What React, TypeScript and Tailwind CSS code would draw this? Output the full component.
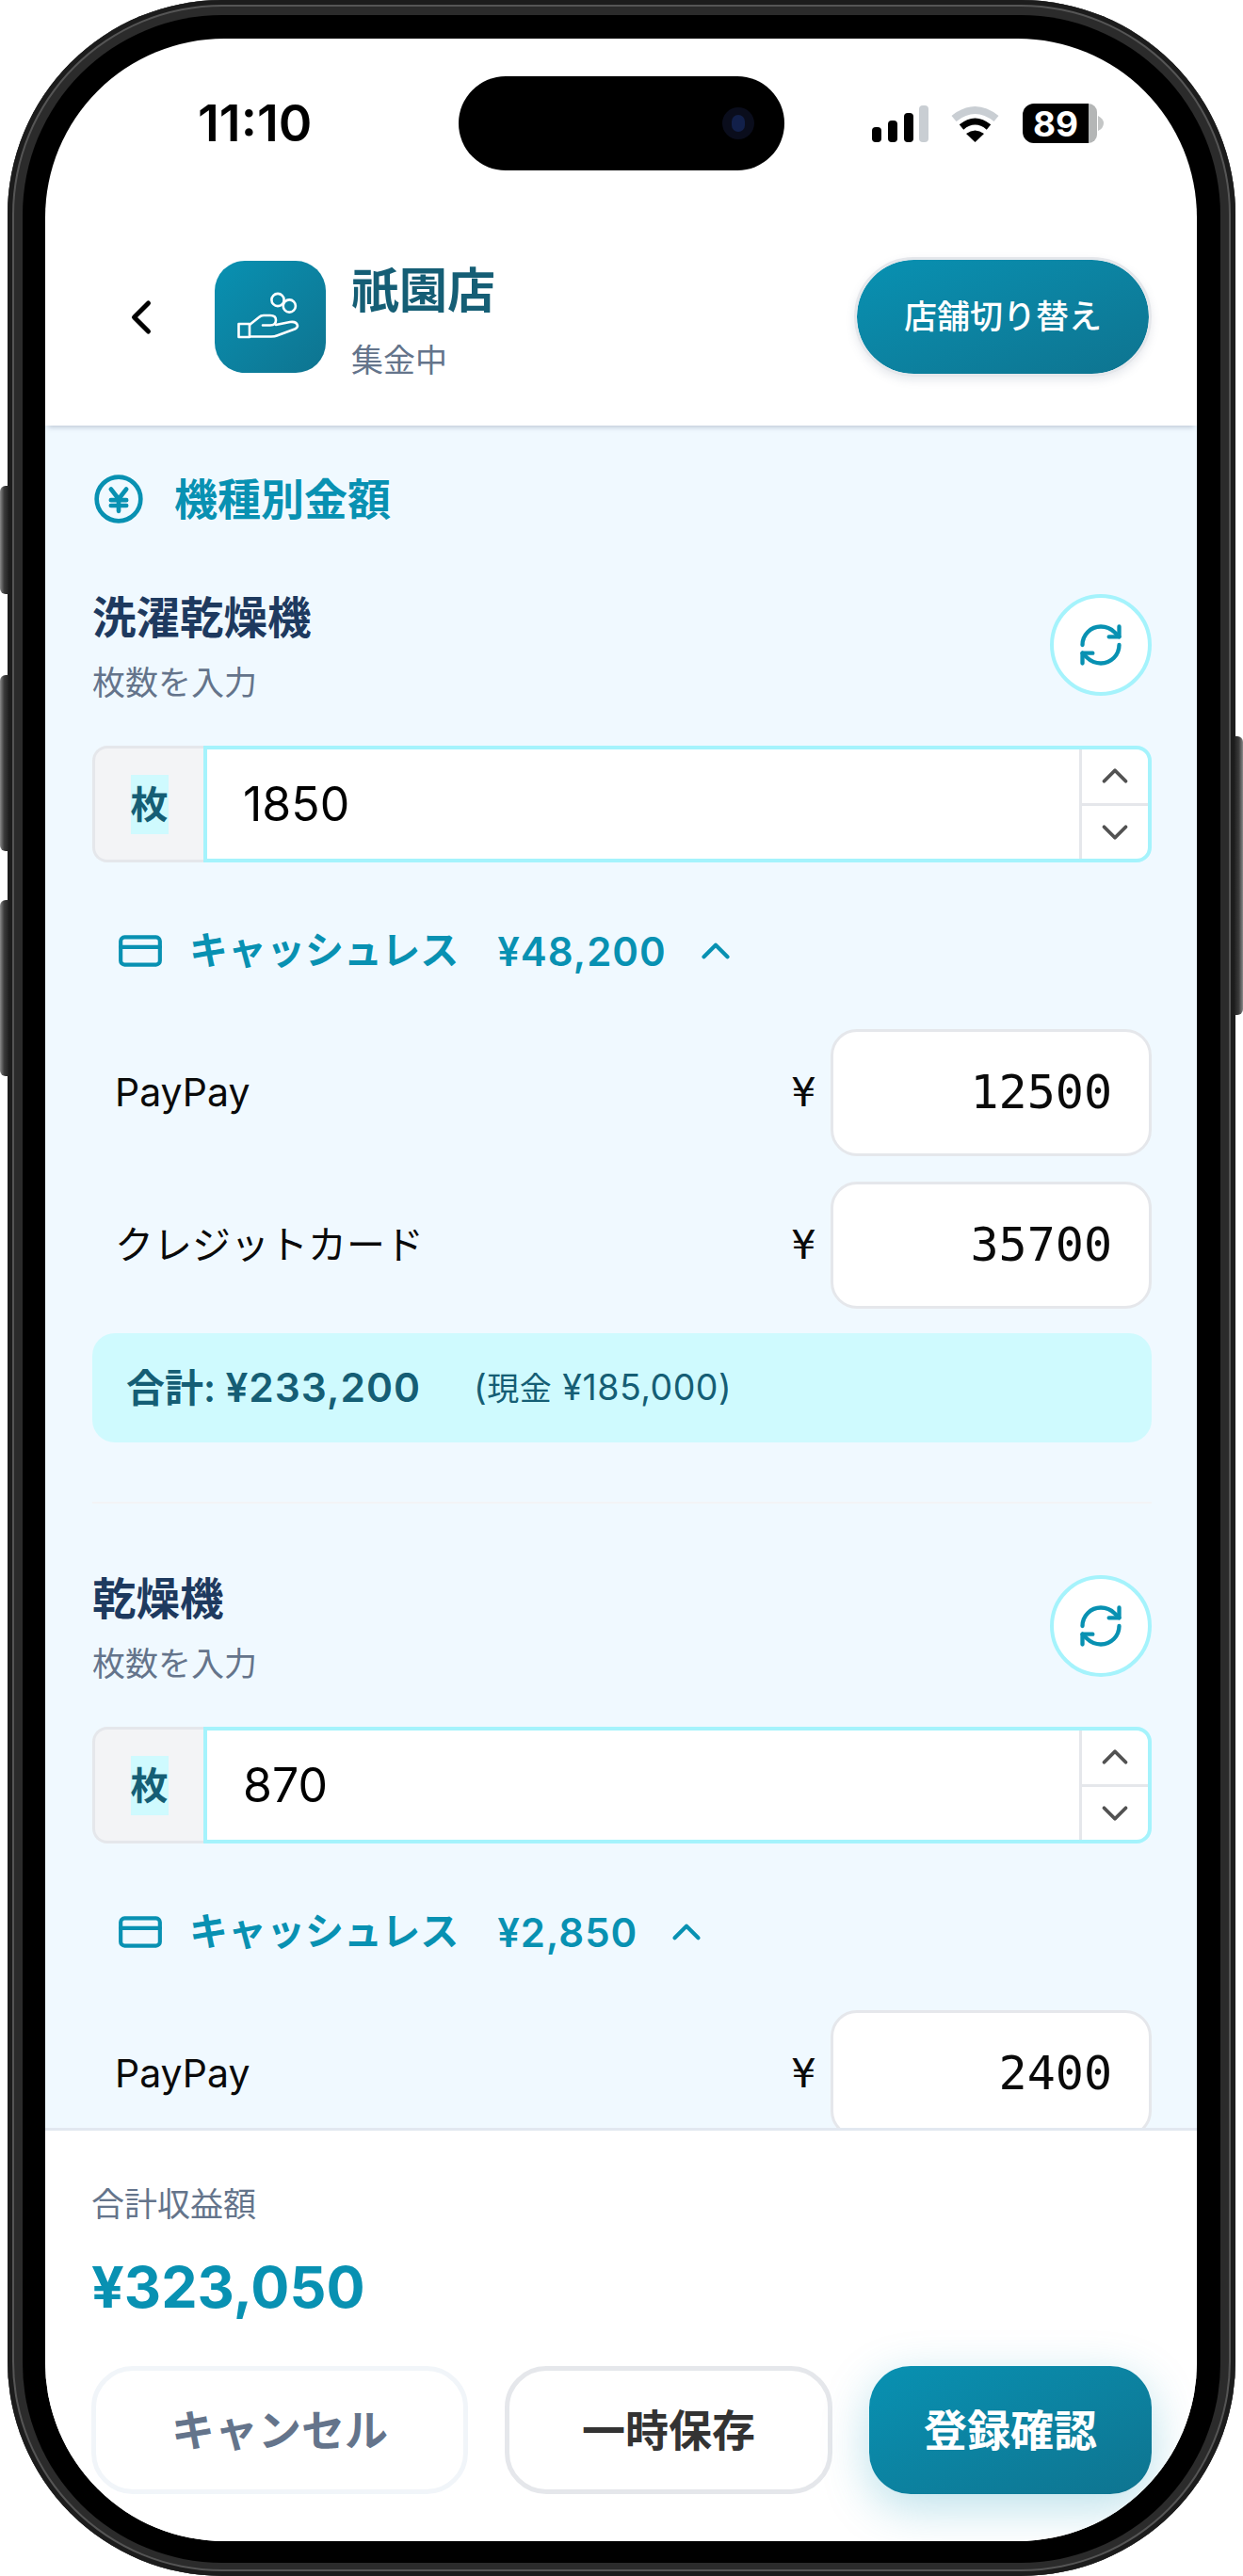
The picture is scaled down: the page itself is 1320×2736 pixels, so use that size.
import { ChevronDown, ChevronLeft, ChevronUp, CreditCard, RefreshCw } from "lucide-react";

type Machine = {
  name: string;
  count: string;
  cashless: string;
  rows: { label: string; value: string }[];
  total?: string;
  cash?: string;
};

const machines: Machine[] = [
  {
    name: "洗濯乾燥機",
    count: "1850",
    cashless: "¥48,200",
    rows: [
      { label: "PayPay", value: "12500" },
      { label: "クレジットカード", value: "35700" },
    ],
    total: "¥233,200",
    cash: "¥185,000",
  },
  {
    name: "乾燥機",
    count: "870",
    cashless: "¥2,850",
    rows: [{ label: "PayPay", value: "2400" }],
  },
];

function StatusBar() {
  return (
    <div className="grid h-[180px] shrink-0 grid-cols-[1fr_346px_1fr] items-center">
      <div className="pl-[162px] text-[54px] leading-none font-semibold text-black">11:10</div>
      <div className="flex h-[100px] items-center justify-end rounded-full bg-black pr-[32px]">
        <div className="flex h-[34px] w-[34px] items-center justify-center rounded-full bg-[#0a0d1c]">
          <div className="h-[18px] w-[14px] rounded-full bg-[#12204a]" />
        </div>
      </div>
      <div className="flex items-center justify-end gap-[24px] pr-[99px]">
        <svg width="60" height="39" viewBox="0 0 60 39">
          <rect x="0" y="23" width="10" height="16" rx="4" fill="#000" />
          <rect x="17" y="16" width="10" height="23" rx="4" fill="#000" />
          <rect x="34" y="8" width="10" height="31" rx="4" fill="#000" />
          <rect x="50" y="0" width="10" height="39" rx="4" fill="#c9ced3" />
        </svg>
        <svg width="51" height="40" viewBox="0 0 51 40">
          <path d="M3 15Q25.5 -3 48 15" fill="none" stroke="#c9ced3" strokeWidth="8" />
          <path d="M11 24Q25.5 12 40 24" fill="none" stroke="#000" strokeWidth="7" />
          <path d="M16 31Q25.5 24 35 31L25.5 40Z" fill="#000" />
        </svg>
        <div className="ml-[1px] flex items-center gap-[1px]">
          <div className="flex h-[42px] w-[79px]">
            <div className="flex flex-1 items-center justify-center rounded-l-[12px] bg-black text-[37px] leading-none font-bold text-white">89</div>
            <div className="w-[9px] rounded-r-[12px] bg-[#b4b6b6]" />
          </div>
          <svg width="6" height="16" viewBox="0 0 6 16">
            <path d="M0 0Q6 3 6 8Q6 13 0 16Z" fill="#c4c6c6" />
          </svg>
        </div>
      </div>
    </div>
  );
}

function StoreHeader() {
  return (
    <header className="z-10 flex h-[231px] shrink-0 items-center pr-[48px] pl-[72px] shadow-[0_5px_5px_-3px_rgba(100,116,139,0.35)]">
      <ChevronLeft size={60} strokeWidth={2} className="text-black" />
      <div className="ml-[48px] flex h-[119px] w-[118px] items-center justify-center rounded-[32px] bg-linear-to-br from-[#0891b2] to-[#0e7490]">
        <svg width="118" height="119" viewBox="0 0 118 119" fill="none" stroke="#fff" strokeWidth="2.6" strokeLinecap="round" strokeLinejoin="round">
          <circle cx="67" cy="41.5" r="6.6" />
          <circle cx="79.3" cy="48" r="6.6" />
          <path d="M25.5 67H37V81H25.5Z" />
          <path d="M37 68L47 60Q49 58 52 58L59 58Q65 58 65 63Q65 68.5 59 68.5L51 68.5" />
          <path d="M65 68L80 65Q87 64 88 69Q88 71 85 72.5L66 79.5Q64 80.5 60 80.5L37 80.5" />
        </svg>
      </div>
      <div className="ml-[27px] flex-1 pt-[10px]">
        <div className="text-[51px] leading-[62px] font-semibold text-[#155e75]">祇園店</div>
        <div className="mt-[21px] text-[34px] leading-[44px] text-[#64748b]">集金中</div>
      </div>
      <button className="h-[127px] w-[316px] rounded-full border-[3px] border-[#e5e7eb] bg-linear-to-br from-[#0891b2] to-[#0e7490] bg-clip-padding text-[35px] font-medium text-white shadow-[0_4px_10px_rgba(100,116,139,0.15)]">
        店舗切り替え
      </button>
    </header>
  );
}

function MachineCard({ machine }: { machine: Machine }) {
  return (
    <section>
      <div className="flex justify-between">
        <div>
          <div className="text-[46.5px] leading-[50px] font-semibold text-[#1e3a5f]">{machine.name}</div>
          <div className="mt-[24px] text-[35px] leading-[40px] text-[#64748b]">枚数を入力</div>
        </div>
        <button className="flex h-[108px] w-[108px] items-center justify-center rounded-full border-[4px] border-[#a5f3fc] bg-white text-[#0891b2]">
          <RefreshCw size={52} strokeWidth={2} />
        </button>
      </div>

      <div className="mt-[47px] flex h-[124px]">
        <div className="flex w-[118px] items-center justify-center rounded-l-[16px] border-[3px] border-r-0 border-[#e5e7eb] bg-[#f3f4f6]">
          <span className="block h-[63px] bg-[#cffafe] text-[40px] leading-[63px] font-semibold text-[#155e75]">枚</span>
        </div>
        <div className="flex flex-1 overflow-hidden rounded-r-[16px] border-[4px] border-[#a5f3fc] bg-white">
          <div className="flex-1 pl-[38px] text-[50px] leading-[116px] text-black">{machine.count}</div>
          <div className="flex w-[73px] flex-col border-l-[3px] border-[#e5e7eb] text-[#525252]">
            <div className="flex flex-1 items-center justify-center border-b-[3px] border-[#e5e7eb]">
              <ChevronUp size={46} strokeWidth={2} />
            </div>
            <div className="flex flex-1 items-center justify-center">
              <ChevronDown size={46} strokeWidth={2} />
            </div>
          </div>
        </div>
      </div>

      <div className="mt-[63px] flex h-[62px] items-center pl-[26px] text-[#0891b2]">
        <CreditCard size={50} strokeWidth={2} />
        <span className="ml-[27px] text-[41px] font-semibold">キャッシュレス</span>
        <span className="ml-[41px] text-[42px] font-semibold tracking-[1px]">{machine.cashless}</span>
        <ChevronUp size={50} strokeWidth={2} className="ml-[27px]" />
      </div>

      <div className="mt-[52px] flex flex-col gap-[27px]">
        {machine.rows.map((row) => (
          <div key={row.label} className="flex items-center">
            <div className="flex-1 pl-[24px] text-[41px] text-[#0a0a0a]">{row.label}</div>
            <span className="mr-[16px] font-['DejaVu_Sans_Mono',monospace] text-[42px] text-[#0a0a0a]">¥</span>
            <div className="h-[135px] w-[341px] rounded-[28px] border-[3px] border-[#e5e7eb] bg-white pr-[39px] text-right font-['DejaVu_Sans_Mono',monospace] text-[50px] leading-[129px] text-[#0a0a0a]">
              {row.value}
            </div>
          </div>
        ))}
      </div>

      {machine.total && (
        <>
          <div className="mt-[26px] flex h-[116px] items-center rounded-[24px] bg-[#cffafe] pl-[36px] text-[#155e75]">
            <span className="text-[41px] font-semibold">合計: <span className="text-[42.5px] tracking-[1px]">{machine.total}</span></span>
            <span className="ml-[56px] text-[37.5px] tracking-[0.5px]">(<span className="text-[34px]">現金</span> {machine.cash})</span>
          </div>
          <div className="mt-[63px] mb-[76px] border-b-[2px] border-[#f3f4f6]" />
        </>
      )}
    </section>
  );
}

function Footer() {
  return (
    <footer className="z-10 h-[439px] shrink-0 border-t-[3px] border-[#e2e8f0] bg-white pt-[58px] pr-[48px] pl-[49px]">
      <div className="text-[35px] leading-[40px] text-[#64748b]">合計収益額</div>
      <div className="mt-[33px] text-[61px] leading-[70px] font-bold text-[#0891b2]">¥323,050</div>
      <div className="mt-[49px] flex h-[136px] gap-[39px]">
        <button className="w-[400px] rounded-[44px] border-[5px] border-[#f1f5f9] bg-white text-[46px] font-semibold text-[#64748b]">キャンセル</button>
        <button className="w-[348px] rounded-[44px] border-[5px] border-[#e5e7eb] bg-white text-[46px] font-semibold text-[#333]">一時保存</button>
        <button className="flex-1 rounded-[44px] bg-linear-to-br from-[#0891b2] to-[#0e7490] text-[46px] font-semibold text-white shadow-[0_14px_50px_rgba(8,145,178,0.28)]">登録確認</button>
      </div>
    </footer>
  );
}

function SideButton({ className }: { className: string }) {
  return <div className={`absolute w-[9px] bg-linear-to-r from-[#8a8a8a] via-[#3a3a3a] to-[#222] ${className}`} />;
}

export default function App() {
  return (
    <div className="relative h-[2736px] w-[1320px] bg-white px-[8px] font-[Inter,'Noto_Sans_CJK_JP',sans-serif]">
      <SideButton className="top-[516px] left-0 h-[115px] rounded-l-[6px]" />
      <SideButton className="top-[717px] left-0 h-[187px] rounded-l-[6px]" />
      <SideButton className="top-[956px] left-0 h-[187px] rounded-l-[6px]" />
      <SideButton className="top-[782px] right-0 h-[296px] rotate-180 rounded-l-[6px]" />

      <div className="h-full rounded-[228px] bg-[#2b2b2b] pt-[16px] pr-[16px] pb-[14px] pl-[16px] shadow-[inset_0_0_0_5px_#1c1c1c,inset_0_0_0_7px_#555]">
        <div className="h-full rounded-[212px] bg-black pt-[25px] pr-[25px] pb-[23px] pl-[24px]">
          <div className="flex h-full flex-col overflow-hidden rounded-[190px] bg-white">
            <StatusBar />
            <StoreHeader />
            <main className="min-h-0 flex-1 overflow-hidden bg-[#f0f9ff] pt-[50px] pr-[48px] pl-[50px]">
              <h2 className="mb-[73px] flex h-[56px] items-center text-[46px] font-semibold text-[#0891b2]">
                <svg width="56" height="56" viewBox="0 0 24 24" fill="none" stroke="currentColor" strokeWidth="2" strokeLinecap="round" strokeLinejoin="round">
                  <circle cx="12" cy="12" r="10" />
                  <path d="M8.5 7.5 12 12l3.5-4.5M12 12v5.5M8.5 12.5h7M8.5 15h7" />
                </svg>
                <span className="ml-[31px]">機種別金額</span>
              </h2>
              {machines.map((machine) => (
                <MachineCard key={machine.name} machine={machine} />
              ))}
            </main>
            <Footer />
          </div>
        </div>
      </div>
    </div>
  );
}
